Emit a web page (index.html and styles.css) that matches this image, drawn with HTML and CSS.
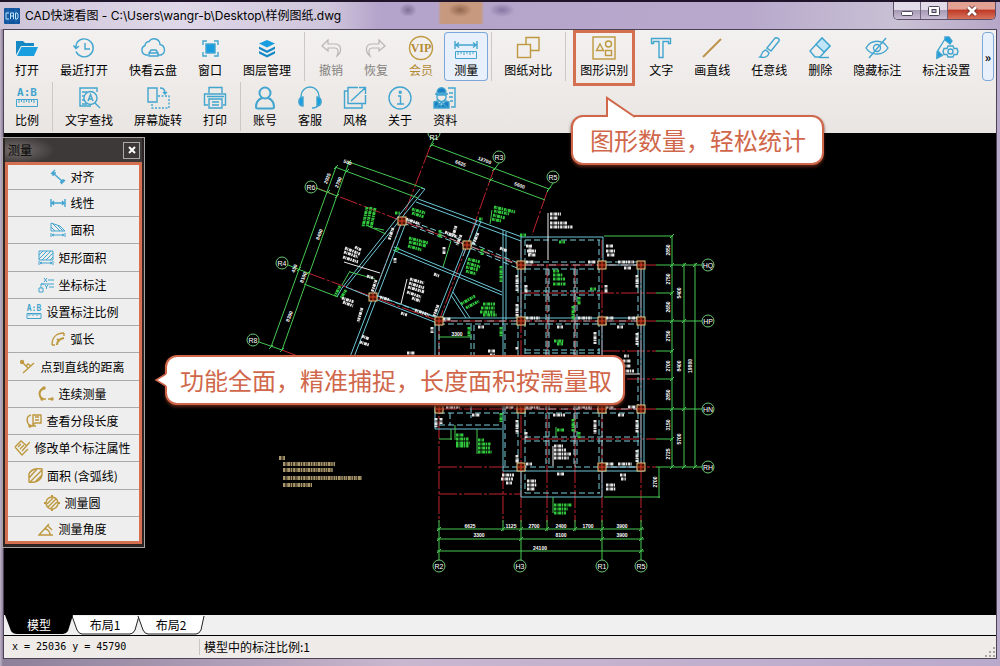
FILE: index.html
```html
<!DOCTYPE html>
<html lang="zh-CN">
<head>
<meta charset="utf-8">
<title>CAD快速看图</title>
<link rel="stylesheet" href="styles.css">
</head>
<body>
<div class="window">
  <header class="titlebar">
    <svg class="app-icon" viewBox="0 0 16 16"><rect width="16" height="16" rx="1" fill="#12559f"/><path d="M0 4h16M0 12h16M4 0v16M12 0v16" stroke="#2c78bd" stroke-width=".6"/><path d="M5 5H2v6h3M6.500 11V5h3v6M6.500 8h3M11.500 5v6h1.500l1-1V6l-1-1z" fill="none" stroke="#bfe6ff" stroke-width="1"/></svg>
    <h1 class="title">CAD快速看图 - C:\Users\wangr-b\Desktop\样例图纸.dwg</h1>
    <div class="window-controls">
      <button class="control" aria-label="最小化"><svg viewBox="0 0 14 12"><rect x="1.500" y="6.500" width="11" height="4" rx="1" fill="#fff" stroke="#4a4658"/></svg></button>
      <button class="control" aria-label="最大化"><svg viewBox="0 0 14 12"><rect x="1.500" y="1.500" width="11" height="9" rx="1" fill="#fff" stroke="#4a4658"/><rect x="5" y="4.500" width="4" height="3" fill="#bcb3c8" stroke="#4a4658"/></svg></button>
      <button class="control close" aria-label="关闭"><svg viewBox="0 0 14 12"><path d="M3 2l8 8M11 2l-8 8" stroke="#6b2a2a" stroke-width="4.500"/><path d="M3 2l8 8M11 2l-8 8" stroke="#fff" stroke-width="2.800"/></svg></button>
    </div>
  </header>

  <div class="client">
    <nav class="toolbar">
      <div class="tool-row">
        <button class="tool"><svg viewBox="0 0 24 24"><path d="M1 5h7l2 2h9v3H6L1 19z" fill="#1689c5"/><path d="M6.500 11H23l-4 9H2z" fill="#1b9ee0"/></svg>打开</button>
        <button class="tool"><svg viewBox="0 0 24 24" class="line"><path d="M5 6.500a9 9 0 1 1-1 9M4 11.500a9 9 0 0 1 1-5M1.500 9.500L4 12.500l3-2.500M13 7v6h5"/></svg>最近打开</button>
        <button class="tool"><svg viewBox="0 0 24 24" class="line"><path d="M7 19H5a5 5 0 0 1-1-9.500 4 4 0 0 1 4-4 6 6 0 0 1 11 3 5.500 5.500 0 0 1 1 10.500h-3M8 20v-3l2-3h5l2 3v3zM8 17h9"/></svg>快看云盘</button>
        <button class="tool"><svg viewBox="0 0 24 24" class="line"><rect x="8" y="8" width="9" height="9" fill="#1b9ee0"/><path d="M5 9V5h4M16 5h4v4M20 16v4h-4M9 20H5v-4" /></svg>窗口</button>
        <button class="tool"><svg viewBox="0 0 24 24" fill="#1689c5"><path d="M12 4l8 3.500-8 4-8-4z" fill="#1b9ee0"/><path d="M4 10.500l8 4 8-4v2.500l-8 4-8-4zM4 15l8 4 8-4v2.500l-8 4-8-4z"/></svg>图层管理</button>
        <span class="sep wide"></span>
        <button class="tool disabled" disabled><svg viewBox="0 0 24 24"><path d="M9 4L3 10l6 5v-3h7c3 0 4 3 2 8 5-4 5-12-2-12H9z"/></svg>撤销</button>
        <button class="tool disabled" disabled><svg viewBox="0 0 24 24"><path d="M15 4l6 6-6 5v-3H8c-3 0-4 3-2 8-5-4-5-12 2-12h7z"/></svg>恢复</button>
        <button class="tool vip"><svg viewBox="0 0 24 24" class="gold"><circle cx="12" cy="12" r="11.500"/><text x="12" y="16" text-anchor="middle" class="vip-text">VIP</text></svg>会员</button>
        <button class="tool active"><svg viewBox="0 0 24 24" class="line"><path d="M1 5v8M23 5v8M2 9h20M5 6.500L2 9l3 2.500M19 6.500l3 2.500-3 2.500"/><path d="M1.500 15.500h21v7h-21zM4 16v3M7 16v2M10 16v3M13 16v2M16 16v3M19 16v2" class="thin"/></svg>测量</button>
        <span class="sep"></span>
        <button class="tool"><svg viewBox="0 0 24 24" class="gold"><path d="M10 8V1.500h13v13h-8"/><rect x="1.500" y="8.500" width="13" height="13"/></svg>图纸对比</button>
        <span class="sep wide"></span>
        <button class="tool marked"><svg viewBox="0 0 24 24" class="gold"><rect x="1" y="1" width="22" height="22"/><path d="M8 8l3.500 6.500h-7z"/><circle cx="16.500" cy="8" r="3"/><rect x="13.500" y="14.500" width="6" height="5"/></svg>图形识别</button>
        <button class="tool"><svg viewBox="0 0 24 24" class="line"><path d="M2.500 2.500h19v5h-2v-2h-5.500v16h-4v-16H4.500v2h-2z"/></svg>文字</button>
        <button class="tool"><svg viewBox="0 0 24 24"><path d="M3 21L21 3" stroke="#bb9045" stroke-width="1.800"/></svg>画直线</button>
        <button class="tool"><svg viewBox="0 0 24 24" class="line"><path d="M10 12l8-10c2-1 5 1 4 3l-8 10zM9 14l3 3c-1 4-5 5-9 4 2-1 1-6 6-7z"/></svg>任意线</button>
        <button class="tool"><svg viewBox="0 0 24 24" class="line"><path d="M2 15L14 2l8 8L12 21H7z"/><path d="M8 8.500l6-6.500 8 8-6 6z" fill="#bfe5f7"/><path d="M11 21.500h10"/></svg>删除</button>
        <button class="tool"><svg viewBox="0 0 24 24" class="line"><path d="M1 12c5-9 17-9 22 0-5 8-17 8-22 0zM21 2L4 22"/><circle cx="12" cy="12" r="3.500"/></svg>隐藏标注</button>
        <button class="tool"><svg viewBox="0 0 24 24" class="line"><path d="M11 3L3 16v6l6-3M12 3l4 4" /><path d="M3 22l1-7 4 4zM11 1l4 0 3 4-2 3-5-4z" fill="#1b9ee0"/><path d="M14 10h5l1 2.500h3l1 3-1 3h-3L19 21h-5l-1-2.500h-3l-1-3 1-3h3z" fill="#efedec"/><circle cx="16.500" cy="15.500" r="2.500"/></svg>标注设置</button>
        <button class="more" aria-label="更多工具">»</button>
      </div>
      <div class="tool-row">
        <button class="tool"><svg viewBox="0 0 24 24" class="line"><text x="12" y="9.500" text-anchor="middle" class="ratio-text">A:B</text><path d="M1.500 13.500h21v7h-21zM4 14v3M6.500 14v2M9 14v3M11.500 14v2M14 14v3M16.500 14v2M19 14v3" class="thin"/></svg>比例</button>
        <span class="sep"></span>
        <button class="tool"><svg viewBox="0 0 24 24" class="line"><path d="M20 6V2H3v18h11M5 6h5M5 10h2M5 14h2M5 18h5M18 17l5 5"/><circle cx="13.500" cy="12" r="6.500"/><path d="M11 15l2.500-6.500L16 15M12 13h3"/></svg>文字查找</button>
        <button class="tool"><svg viewBox="0 0 24 24" class="line"><path d="M2 2h9v14H2zM14 2c4 0 5 2 5 5M17 6l2 2 2-2"/><path d="M12 10h11v12H6v-5" stroke-dasharray="2 1.500"/></svg>屏幕旋转</button>
        <button class="tool"><svg viewBox="0 0 24 24" class="line"><path d="M6 7V1.500h13V7M5 19H1.500V8h21v11H20M6 13h13v9H6zM4 10.500h17M9 16h7M9 19h7"/></svg>打印</button>
        <span class="sep"></span>
        <button class="tool"><svg viewBox="0 0 24 24" class="line heavy"><circle cx="12" cy="7" r="5.500"/><path d="M9 12c-5 2-6 5-6 9 0 1 1 1.500 2 1.500h14c1 0 2 0 2-1.500 0-4-1-7-6-9"/></svg>账号</button>
        <button class="tool"><svg viewBox="0 0 24 24" class="line"><path d="M3 12V10a9 9 0 0 1 18 0v2M20 18c0 3-3 4-6 4"/><path d="M5 11v9c-5 0-6-8 0-9zM19 11v9c5 0 6-8 0-9z" fill="#1b9ee0"/></svg>客服</button>
        <button class="tool"><svg viewBox="0 0 24 24" class="line"><path d="M15 1.500H5v16h17.500V9M5 5H1.500v17H19v-4M8 15L22 2M16 1.500h6.500v6.500"/></svg>风格</button>
        <button class="tool"><svg viewBox="0 0 24 24" class="line"><circle cx="12" cy="12" r="11"/><path d="M10 10h2.500v8M9 18h7M11.500 5.500h1.500v1.500h-1.500z"/></svg>关于</button>
        <button class="tool"><svg viewBox="0 0 24 24" class="line"><path d="M2 8h13M4 9v2c0 6 9 6 9 0V9z"/><path d="M4 7c0-7 9-7 9 0zM1 22v-6l3-1 4 5 5-5 3 1v6z" fill="#1b7fc4"/><path d="M15 2h7v19h-4M16 7h4M16 11h4M17 15h3M4 13l10 8M13 13L3 21" /></svg>资料</button>
      </div>
    </nav>

    <main class="canvas">
      <svg class="drawing" viewBox="4 133 992 482" preserveAspectRatio="xMinYMin meet">
        <defs>
          <g id="col"><rect x="-4" y="-4" width="8" height="8" class="column"/><path d="M-4 0h8M0-4v8" class="column-axis"/></g>
          <path id="tick" d="M-2 2l4-4" class="dim"/>
        </defs>

        <!-- axes -->
        <path class="axis" d="M317 188L402 221M402 221L521 265M308 273L373 297L439 321M282 350L300 357M430 147L402 220L373 297M494 169L467 245L439 321M547 192L532 235
          M439 321H656M521 265H656M439 409H656M439 467H503M602 467H656M439 494H521M521 293H656M602 351H656M602 379H656M521 439H656
          M439 321V522M503 471V522M547 265V522M575 265V522M521 240V522M602 240V522M641 265V522"/>

        <!-- solid walls -->
        <path class="wall" d="M425 189L346 287M420 189L342 288M342 288L337 297M425 189l-4-1M418 199L522 237M416 202L521 241M477 220L463 256M481 221L467 257
          M401 224L350 357M405 225L354 357M393 250L502 295M394 247L502 292M373 294L439 318M346 287L375 299L437 323M464 248L436 318M470 250L442 318
          M453 292L470 318M451 295L466 318M521 237H603M521 237V262M603 237V262M503 230V471M506 232V320M435 322V429M435 429H502M503 471H644M521 471V497H602V471M644 265V471M641 269V467M602 325V405M439 405H520M439 318H640M521 269V318M606 265H638M602 467H641"/>

        <!-- hidden walls -->
        <g class="hidden-wall">
          <path d="M405 219L467 242M403 223L465 246M471 243L518 263M470 248L517 268M378 296L437 318"/>
          <path d="M525 240H600M525 240V493M599 240V493M525 262H640M525 269H600M525 291H600M525 295H600M439 324H640M525 350H600M525 353H600M439 413H640M525 437H640M525 441H640M503 467H640M525 493H600M439 425H502"/>
          <path d="M518 269V467M546 269V467M549 269V467M574 269V467M577 269V467M439 325V405M471 325V418M474 325V405M505 325V467M602 413V467M638 269V467M450 413V425"/>
        </g>
        <path class="hidden-white" d="M405 221L518 265M439 321H640M525 265H640M525 409H640M548 269V350M575 269V467"/>

        <!-- dimensions -->
        <path class="dim" d="M336 167L271 347M349 162L282 350M349 162L423 188M335 167L418 198M316 188L337 196M288 265L308 273M304 284L338 297M259 342L282 350
          M434 139L430 147M432 145L549 189M427 156L545 200M499 163L494 170M553 183L547 192M368 226L386 234M384 230L374 228M350 271L342 285M350 272L375 279M451 241L443 267M439 337H472
          M604 236H673M604 497H660M659 467V498M672 236V467M684 263V467M695 263V467M656 265H702M656 321H702M656 409H702M656 467H702M656 293H673M656 351H673M656 379H673M656 439H673
          M439 520V560M521 520V560M602 520V560M641 520V560M503 520V531M547 520V531M575 520V531M437 529H644M437 539H644M437 551H644M439 439H452M451 429V440M455 425V440M477 429V454M553 497V513M492 210L490 224M556 365V355M556 427V437"/>
        <g>
          <use href="#tick" x="336" y="167"/><use href="#tick" x="349" y="162"/><use href="#tick" x="347" y="171"/><use href="#tick" x="328" y="192"/><use href="#tick" x="337" y="196"/><use href="#tick" x="299" y="269"/><use href="#tick" x="308" y="273"/><use href="#tick" x="271" y="347"/><use href="#tick" x="282" y="350"/><use href="#tick" x="432" y="145"/><use href="#tick" x="494" y="169"/><use href="#tick" x="549" y="189"/><use href="#tick" x="491" y="180"/>
          <use href="#tick" x="672" y="236"/><use href="#tick" x="672" y="265"/><use href="#tick" x="672" y="293"/><use href="#tick" x="672" y="321"/><use href="#tick" x="672" y="351"/><use href="#tick" x="672" y="379"/><use href="#tick" x="672" y="409"/><use href="#tick" x="672" y="439"/><use href="#tick" x="672" y="467"/><use href="#tick" x="684" y="265"/><use href="#tick" x="684" y="321"/><use href="#tick" x="684" y="409"/><use href="#tick" x="684" y="467"/><use href="#tick" x="695" y="265"/><use href="#tick" x="695" y="467"/>
          <use href="#tick" x="439" y="529"/><use href="#tick" x="503" y="529"/><use href="#tick" x="521" y="529"/><use href="#tick" x="547" y="529"/><use href="#tick" x="575" y="529"/><use href="#tick" x="602" y="529"/><use href="#tick" x="641" y="529"/><use href="#tick" x="439" y="539"/><use href="#tick" x="521" y="539"/><use href="#tick" x="602" y="539"/><use href="#tick" x="641" y="539"/><use href="#tick" x="439" y="551"/><use href="#tick" x="641" y="551"/>
        </g>

        <!-- axis bubbles -->
        <g class="bubble">
          <circle cx="311" cy="187" r="6"/><circle cx="282" cy="263" r="6"/><circle cx="253" cy="340" r="6"/><circle cx="434" cy="133" r="6"/><circle cx="499" cy="157" r="6"/><circle cx="553" cy="177" r="6"/>
          <circle cx="708" cy="265" r="6"/><circle cx="708" cy="321" r="6"/><circle cx="708" cy="409" r="6"/><circle cx="708" cy="467" r="6"/>
          <circle cx="439" cy="566" r="6"/><circle cx="520" cy="566" r="6"/><circle cx="602" cy="566" r="6"/><circle cx="641" cy="566" r="6"/>
        </g>
        <g class="bubble-text">
          <text x="311" y="190">R6</text><text x="282" y="266">R4</text><text x="253" y="343">R8</text><text x="434" y="140">R1</text><text x="499" y="160">R3</text><text x="553" y="180">R5</text>
          <text x="708" y="268">HQ</text><text x="708" y="324">HP</text><text x="708" y="412">HN</text><text x="708" y="470">RH</text>
          <text x="439" y="569">R2</text><text x="520" y="569">H3</text><text x="602" y="569">R1</text><text x="641" y="569">R5</text>
        </g>

        <!-- dimension values -->
        <g class="dim-text">
          <text x="470" y="528">6625</text><text x="511" y="528">1125</text><text x="534" y="528">2700</text><text x="561" y="528">2400</text><text x="588" y="528">1700</text><text x="622" y="528">3900</text>
          <text x="479" y="537">3300</text><text x="561" y="537">8100</text><text x="622" y="537">3900</text><text x="540" y="550">24100</text>
          <text transform="translate(670 250)rotate(-90)">2850</text><text transform="translate(670 279)rotate(-90)">2750</text><text transform="translate(670 307)rotate(-90)">2650</text><text transform="translate(670 336)rotate(-90)">2750</text><text transform="translate(670 366)rotate(-90)">2700</text><text transform="translate(670 395)rotate(-90)">2850</text><text transform="translate(670 425)rotate(-90)">3150</text><text transform="translate(670 454)rotate(-90)">2725</text>
          <text transform="translate(681 293)rotate(-90)">5400</text><text transform="translate(681 366)rotate(-90)">8400</text><text transform="translate(681 439)rotate(-90)">5700</text><text transform="translate(692 366)rotate(-90)">19800</text><text transform="translate(657 482)rotate(-90)">2700</text>
          <text transform="translate(460 165)rotate(20)">6625</text><text transform="translate(484 162)rotate(20)">12700</text><text transform="translate(519 187)rotate(20)">5600</text>
          <text transform="translate(329 179)rotate(-70)">2925</text><text transform="translate(340 183)rotate(-70)">2700</text><text transform="translate(321 235)rotate(-70)">8400</text><text transform="translate(305 278)rotate(-70)">8100</text><text transform="translate(291 317)rotate(-70)">8300</text><text x="457" y="336">3300</text><text transform="translate(347 164)rotate(20)">500</text><text transform="translate(296 269)rotate(-70)">450</text>
        </g>

        <!-- green annotations -->
        <g class="note green">
          <path d="M367 207l-4 20M371 207l-4 20M375 208l-4 20"/><path d="M412 209l13 4M412 213l12 4M409 238l19 5M409 242l17 4M408 246l14 4"/>
          <path d="M494 207l21 5M494 211l15 3M493 215l12 3M492 219l9 2"/><path d="M468 259l12 3M467 263l13 4M466 267l12 3M466 271l10 3"/>
          <path d="M461 304l14-8M466 308l13-7M483 304h12M481 308h14M480 312h15M483 315h14"/>
          <path d="M553 271h6M553 275h10M553 279h12M553 284h13M559 242h6M554 341h10M557 344h6"/>
          <path d="M456 435h8M456 439h13M456 443h14M456 446h13M478 440h6M478 444h13M478 448h12M478 452h14"/>
          <path d="M554 505h18M554 509h14M554 513h12M557 430h7M399 248l-4 3"/>
          <path d="M501 266v16M573 306v14M573 419v13M469 327v10M501 327v10M579 297v8M590 289h6M579 432v6M501 413v9M340 286l-5 10M346 290l-5 8M395 213h5M440 230v8M482 249v6"/>
          <path d="M520 235h6M479 219h4"/>
        </g>

        <!-- white annotations -->
        <path class="leader" d="M548 213V260M344 262L380 273M407 279L401 304M553 446V466M611 374H640"/>
        <g class="note white">
          <path d="M550 214h11M550 218h8M550 223h17M550 227h23"/><path d="M345 248l15 6M344 252l14 5M343 257l15 5M355 247l6 3"/>
          <path d="M410 279l14 4M409 283l15 5M408 287l16 5M407 292l14 5M412 298l8 3"/><path d="M342 298l12 4M343 302l10 4M360 342l9 3M362 336l7 3"/>
          <path d="M554 446h9M554 450h12M554 454h17M554 458h15"/><path d="M526 246h6M527 251h9M528 255h8M606 246h7M606 251h9M607 255h8"/>
          <path d="M624 356h5M623 361h8M623 366h8M622 371h12"/><path d="M502 475h12M501 479h12M506 483h6M527 481h9M527 485h10M527 489h8M606 485h9M606 489h10M620 475h6M621 479h5"/>
          <path d="M436 418v10M441 418v6M517 420v14M517 347v3M517 275v16M517 304v14M595 420v14M595 332v12M637 275v13M637 333v12M637 420v13M637 450v12M526 285v8M606 285v8M517 455v8M526 432v6"/>
          <path d="M526 318h14M578 318h14M606 318h8M628 318h9M526 262h8M588 262h8M618 262h16M557 327h6M617 327h6M478 327h6M526 407h14M578 407h14M606 407h8M628 407h8M506 407h8M446 407h14M472 415h8M553 415h12M618 415h6M557 474h7M526 464h6M606 464h8M618 464h14M624 268h7"/>
          <path d="M406 219l14 5M445 232l12 5M461 235l-4 10M393 228l-4 12M376 280l-4 12M362 308l-4 14M438 305l-4 11M380 297l10 3M415 310l14 5M401 313l6 2M443 319h8M367 276l6 2M478 233l-5 12M432 327v6M456 226l-3 10M434 274l5 2M488 351h7M490 355h5M407 353h8M530 245v10M500 248l7 3M395 258v5M444 247v7"/>
        </g>

        <g class="note tan">
          <path d="M279 458h6M283 464h52M283 470h50M283 478h79M283 485h29"/>
        </g>

        <!-- columns -->
        <g>
          <use href="#col" x="402" y="221"/><use href="#col" x="373" y="297"/><use href="#col" x="467" y="245"/><use href="#col" x="439" y="321"/>
          <use href="#col" x="521" y="265"/><use href="#col" x="602" y="265"/><use href="#col" x="641" y="265"/><use href="#col" x="521" y="321"/><use href="#col" x="602" y="321"/><use href="#col" x="641" y="321"/>
          <use href="#col" x="439" y="409"/><use href="#col" x="521" y="409"/><use href="#col" x="602" y="409"/><use href="#col" x="641" y="409"/><use href="#col" x="521" y="467"/><use href="#col" x="602" y="467"/><use href="#col" x="641" y="467"/>
        </g>
      </svg>

      <section class="panel" aria-label="测量">
        <div class="panel-head"><h2 class="panel-title">测量</h2><button class="panel-close" aria-label="关闭面板"><svg viewBox="0 0 8 8"><path d="M1 1l6 6M7 1L1 7" stroke="#fff" stroke-width="2"/></svg></button></div>
        <div class="panel-list">
          <button class="measure"><svg viewBox="0 0 16 16" class="line"><path d="M3 4l10 9M1 5l4-4M11 15l4-4M3 4h3M3 4v3M13 13h-3M13 13v-3"/></svg>对齐</button>
          <button class="measure"><svg viewBox="0 0 16 16" class="line"><path d="M1 4v8M15 4v8M2 8h12M4 6L2 8l2 2M12 6l2 2-2 2"/></svg>线性</button>
          <button class="measure"><svg viewBox="0 0 16 16" class="line thin"><path d="M1 9V1l9 3 5 5zM1 5l4 4M3 2l7 7M8 4l5 5M1 11v4M15 11v4M2 13h12M4 12l-2 1 2 1M12 12l2 1-2 1"/></svg>面积</button>
          <button class="measure"><svg viewBox="0 0 16 16" class="line thin"><path d="M1 1h14v9H1zM1 5l4-4M1 9l8-8M4 10l9-9M8 10l7-7M12 10l3-3M1 11v4M15 11v4M2 13h12M4 12l-2 1 2 1M12 12l2 1-2 1"/></svg>矩形面积</button>
          <button class="measure"><svg viewBox="0 0 16 16" class="line thin"><path d="M1 11h4v4H1zM3 11V7h3M6 1l3 4M9 1L6 5M10 3h6M3 7h13M7 8l1.500 2L10 8M8.500 10v2M11 10h5"/></svg>坐标标注</button>
          <button class="measure"><svg viewBox="0 0 16 16" class="line thin"><text x="8" y="7" text-anchor="middle" class="ratio-small">A:B</text><path d="M1 9.500h14v5H1zM3 10v2M5 10v1M7 10v2M9 10v1M11 10v2M13 10v1"/></svg>设置标注比例</button>
          <button class="measure"><svg viewBox="0 0 16 16" class="gold"><path d="M2 14C2 6 7 2 14 2M2 14h3M14 2v3"/><path d="M7 14c0-4 2-6 7-7M7 8l3 2" stroke-width="2"/></svg>弧长</button>
          <button class="measure"><svg viewBox="0 0 16 16" class="gold"><path d="M3 14L14 4M2 3l6 6M6 7l2-2 3 2"/><circle cx="2" cy="3" r="1.500" fill="#c5a04b"/></svg>点到直线的距离</button>
          <button class="measure"><svg viewBox="0 0 16 16" class="gold"><path d="M6 2C1 4 0 9 4 13" stroke-width="2"/><path d="M5 13h8" stroke-dasharray="3 2"/><circle cx="6" cy="2" r="1" fill="#c5a04b"/><circle cx="4" cy="13" r="1" fill="#c5a04b"/><circle cx="14" cy="13" r="1" fill="#c5a04b"/></svg>连续测量</button>
          <button class="measure"><svg viewBox="0 0 16 16" class="gold"><path d="M5 2C0 3 0 9 4 13h6M7 2h8v8H9l-2 2zM9 4h4M9 7h4"/><circle cx="4" cy="13" r="1" fill="#c5a04b"/></svg>查看分段长度</button>
          <button class="measure"><svg viewBox="0 0 16 16" class="gold"><path d="M1 7l6-6 6 5M1 7l7 8 6-6M4 7l3-3M6 9l4-4M8 11l7-8 1-1"/></svg>修改单个标注属性</button>
          <button class="measure"><svg viewBox="0 0 16 16" class="gold"><path d="M2 14V6c2-5 8-6 13-5v6c-1 6-7 8-13 7zM2 10l8-9M3 14L15 2M8 14l7-7"/></svg>面积 (含弧线)</button>
          <button class="measure"><svg viewBox="0 0 16 16" class="gold"><circle cx="8" cy="8" r="6"/><path d="M3 9l6-6M4 12l8-8M7 13l6-6"/><path d="M1 7v2M15 7v2M7 1h2M7 15h2" stroke-width="2"/></svg>测量圆</button>
          <button class="measure"><svg viewBox="0 0 16 16" class="gold"><path d="M11 3L1 14h14M7 8c3 0 5 3 5 6M9 4l5 5"/></svg>测量角度</button>
        </div>
      </section>

      <div class="callout callout-tools">图形数量，轻松统计<svg class="tail-up" viewBox="0 0 34 22"><path d="M3 22V2L30 20.500V22z" fill="#fff"/><path d="M3 21V2L31 21" fill="none" stroke="#d0674a" stroke-width="2"/></svg></div>
      <div class="callout callout-measure">功能全面，精准捕捉，长度面积按需量取<svg class="tail-left" viewBox="0 0 14 16"><path d="M14 1L2 8l12 7z" fill="#fff"/><path d="M12 2L2 8l10 6" fill="none" stroke="#d0674a" stroke-width="1.500"/></svg></div>
    </main>

    <div class="tabs" role="tablist">
      <button class="tab current" role="tab" aria-selected="true"><svg viewBox="0 0 68 20" preserveAspectRatio="none"><path d="M0 0h68L63 16q-2 3-5 3H12q-4 0-6-3z" fill="#000"/></svg><span>模型</span></button>
      <button class="tab" role="tab"><svg viewBox="0 0 68 20" preserveAspectRatio="none"><path d="M1 1l5 14q2 4 5 4h48q3 0 5-4l4-14" fill="#fff" stroke="#222"/></svg><span>布局1</span></button>
      <button class="tab" role="tab"><svg viewBox="0 0 68 20" preserveAspectRatio="none"><path d="M1 1l5 14q2 4 5 4h48q3 0 5-4l3-14" fill="#fff" stroke="#222"/></svg><span>布局2</span></button>
    </div>
    <footer class="status"><span class="coords">x = 25036 y = 45790</span><span class="scale">模型中的标注比例:1</span><svg class="grip" viewBox="0 0 12 12" fill="#aaa4a0"><path d="M9 1h2v2H9zM9 5h2v2H9zM9 9h2v2H9zM5 5h2v2H5zM5 9h2v2H5zM1 9h2v2H1z"/></svg></footer>
  </div>
</div>
</body>
</html>
```
FILE: styles.css
```css
* { box-sizing: border-box; }

body {
  margin: 0;
  font: 12px/18px "Noto Sans CJK SC", sans-serif;
  color: #000;
}

button {
  margin: 0;
  padding: 0;
  border: 0;
  background: none;
  font: inherit;
  color: inherit;
}

h1, h2 { margin: 0; font: inherit; }

/* Window frame */
.window {
  display: flex;
  flex-direction: column;
  min-height: 100vh;
  padding: 0 3px 7px;
  background: linear-gradient(90deg, #bfb3c8 0, #8d8098 3px, #c9b6cf 40%, #b9a9cb 100%);
  border-top: 2px solid #20142a;
  border-bottom: 1px solid #241b30;
}

.titlebar {
  display: flex;
  align-items: center;
  gap: 5px;
  height: 27px;
  margin: 0 -3px;
  padding-left: 4px;
  background:
    radial-gradient(ellipse 9px 7px at 408px 8px, #7d6f98 0, transparent 100%),
    radial-gradient(ellipse 12px 7px at 460px 8px, #92664e 0, transparent 100%),
    radial-gradient(ellipse 13px 7px at 502px 8px, #8577a2 0, transparent 100%),
    linear-gradient(90deg, transparent 438px, #c79a7f 441px, #c79a7f 481px, transparent 484px) 0 0 / 100% 22px no-repeat,
    linear-gradient(90deg, #cdc4d8 0, #dfd8e8 180px, #cfc5db 330px, #b4a3ca 380px, #b8a9cc 750px, #c9c1d4 900px, #b7a6c7 100%);
}

.app-icon { width: 16px; height: 16px; }
.title { flex: 1; font-family: Inter, "Noto Sans CJK SC", sans-serif; }

.window-controls {
  display: flex;
  align-self: flex-start;
  margin-right: 4px;
  border: 1px solid #5b5068;
  border-top: 0;
  border-radius: 0 0 5px 5px;
  overflow: hidden;
}

.control {
  display: grid;
  place-items: center;
  width: 27px;
  height: 17px;
  background: linear-gradient(#e2dce9 0 45%, #a79ab5 50%, #c8bdd3);
  border-right: 1px solid #6f637d;
}
.control svg { width: 14px; height: 12px; }
.control.close { width: 47px; border: 0; background: linear-gradient(#e3a193 0 40%, #bf3c28 50%, #d8735c); }

.client {
  display: flex;
  flex: 1;
  flex-direction: column;
  border: 1px solid #4b4457;
}

/* Toolbar */
.toolbar {
  display: flex;
  flex-direction: column;
  gap: 1px;
  padding: 2px 2px 2px 1px;
  background: linear-gradient(#f3f1f0, #e9e5e2);
}
.tool-row { display: flex; gap: 1px; }

.tool {
  position: relative;
  display: flex;
  flex: none;
  flex-direction: column;
  align-items: center;
  gap: 1px;
  padding: 4px 10px 2px;
  white-space: nowrap;
}
.tool svg { width: 24px; height: 24px; overflow: visible; }
.tool.active { background: #e8f1fb; box-shadow: inset 0 0 0 1px #7da7d9; border-radius: 4px; }
.tool.vip { color: #b48a35; }
.tool.disabled { color: #858280; }
.tool.disabled svg { fill: none; stroke: #b9b6b3; stroke-width: 1.2px; }
.tool.marked::after {
  content: "";
  position: absolute;
  inset: -2px 3px -5px;
  border: 3px solid #d4704f;
}

.line { fill: none; stroke: #42a5cf; stroke-width: 1.4px; }
.gold { fill: none; stroke: #bd983e; stroke-width: 1.4px; }
.thin { stroke-width: 1px; }
.heavy { stroke-width: 2px; }
.vip-text { font: bold 12px "Liberation Serif", serif; fill: #b48a35; stroke: none; }
.ratio-text { font: bold 11px "DejaVu Sans Mono", monospace; fill: #42a5cf; stroke: none; }
.ratio-small { font: bold 8px "DejaVu Sans Mono", monospace; fill: #42a5cf; stroke: none; }

.sep { flex: none; width: 4px; background: linear-gradient(90deg, transparent 2px, #cbc8c5 2px, #cbc8c5 3px, transparent 3px); }
.sep.wide { width: 6px; }

.more {
  width: 12px;
  margin-left: auto;
  background: #e8f1fb;
  border: 1px solid #7da7d9;
  border-radius: 4px;
  font-weight: bold;
}

/* Drawing area */
.canvas { position: relative; flex: 1; background: #000; }
.drawing { display: block; width: 100%; height: auto; }

.axis, .wall, .hidden-wall, .hidden-white, .dim, .leader, .bubble { fill: none; stroke-width: 1px; }
.axis { stroke: #c0242f; stroke-dasharray: 18 2 3 2; }
.wall { stroke: #6cc6d6; }
.hidden-wall { stroke: #7ccfdb; stroke-dasharray: 6 3; }
.hidden-white { stroke: #a8a8b0; stroke-dasharray: 7 5; }
.dim { stroke: #46c852; }
.leader { stroke: #eee; }
.bubble { stroke: #6cc874; }
.column { fill: #501400; stroke: #e8cf8c; }
.column-axis { stroke: #d8402a; }
.bubble-text { font: 7px "Liberation Sans", sans-serif; fill: #fff; text-anchor: middle; }
.dim-text { font: bold 5px "Liberation Sans", sans-serif; fill: #fff; text-anchor: middle; }
.note { fill: none; stroke-width: 3px; stroke-dasharray: 2 .5 1 .7 3 .6 1.500 .8; }
.green { stroke: #32c83e; }
.white { stroke: #e4e4e4; }
.tan { stroke: #a8966a; stroke-width: 4px; }

/* Measure panel */
.panel {
  position: absolute;
  top: 4px;
  left: -2px;
  width: 143px;
  padding: 0 2px 3px;
  background: #2b2423;
  border: 1px solid #a9a4a4;
}
.panel-head {
  display: flex;
  align-items: center;
  justify-content: space-between;
  height: 24px;
  padding: 0 2px 0 3px;
  background: radial-gradient(ellipse 38px 14px at 12px 12px, #77716f, #3d3938);
}
.panel-close {
  display: grid;
  place-items: center;
  width: 17px;
  height: 17px;
  border: 1px solid #aaa;
}
.panel-close svg { width: 8px; height: 8px; }
.panel-list { border: 3px solid #d4704f; }
.measure {
  display: flex;
  align-items: center;
  justify-content: center;
  gap: 4px;
  width: 100%;
  height: 27px;
  padding-right: 2px;
  background: #efeeee;
  border-bottom: 1px solid #aaa;
  white-space: nowrap;
}
.measure:nth-child(4n) { height: 28px; }
.measure:first-child { height: 25px; }
.measure:last-child { height: 24px; border-bottom: 0; }
.measure svg { flex: none; width: 16px; height: 16px; }

/* Callouts */
.callout {
  position: absolute;
  padding: 5px 16px 5px 17px;
  background: #fff;
  border: 2px solid #d0674a;
  border-radius: 12px;
  box-shadow: 0 2px 3px #5a2418;
  color: #d0674a;
  font-size: 24px;
  line-height: 36px;
  white-space: nowrap;
}
.callout-tools { top: -18px; left: 567px; }
.callout-measure { top: 222px; left: 161px; padding: 5px 11px 5px 13px; }
.tail-up { position: absolute; left: 31px; bottom: 100%; width: 34px; height: 22px; margin-bottom: -1px; }
.tail-left { position: absolute; top: 15px; right: 100%; width: 14px; height: 16px; margin-right: -1px; }

/* Layout tabs and status bar */
.tabs { display: flex; height: 21px; padding-left: 1px; background: #f1f0f0; border-bottom: 1px solid #000; }
.tab { position: relative; width: 68px; height: 20px; margin-right: -2px; }
.tab svg { position: absolute; inset: 0; width: 100%; height: 100%; }
.tab span { position: relative; }
.tab.current { z-index: 1; color: #fff; }

.status { display: flex; align-items: center; height: 22px; padding-left: 8px; background: #eeebe8; }
.coords { width: 188px; border-right: 1px solid #c9c5c2; font: 10px/16px "DejaVu Sans Mono", monospace; }
.scale { flex: 1; padding-left: 4px; }
.grip { align-self: flex-end; width: 12px; height: 12px; }
```
